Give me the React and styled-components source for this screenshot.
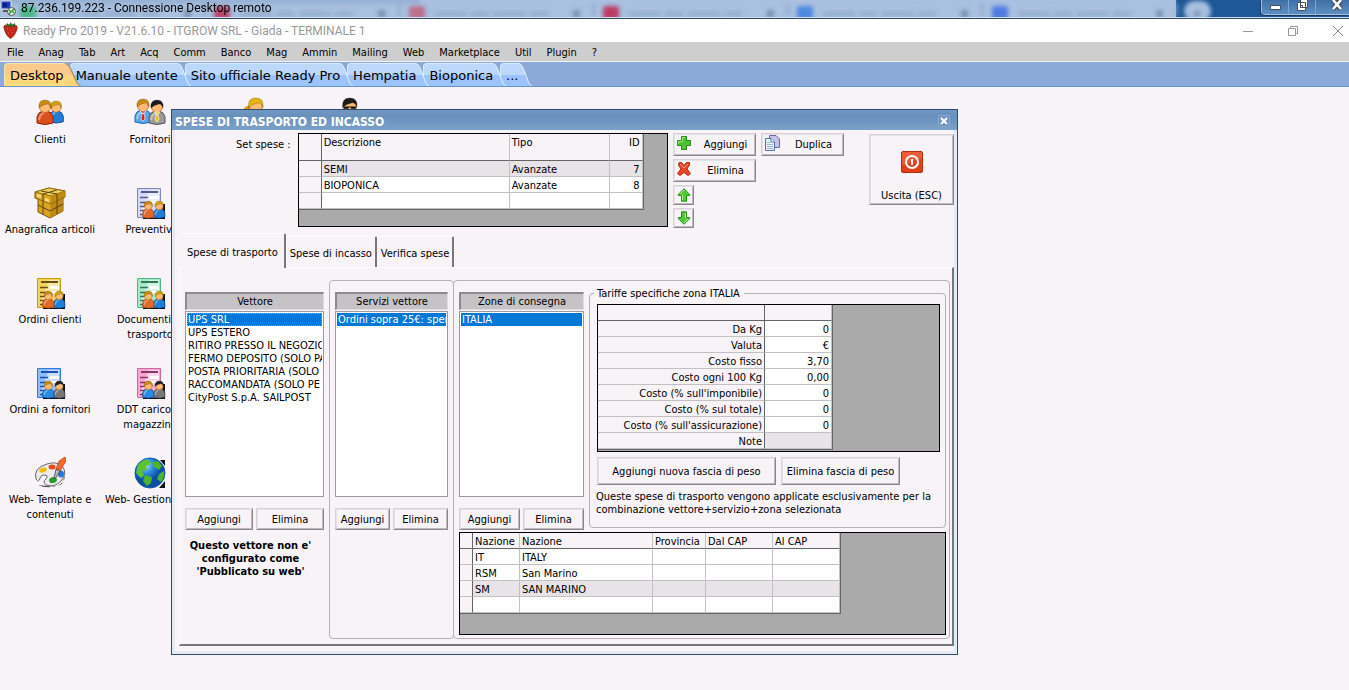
import { useState } from "react";
import styled, { createGlobalStyle, css } from "styled-components";

const GlobalStyle = createGlobalStyle`
    * {
        box-sizing: border-box;
    }
    body {
        margin: 0;
        background: #f7f3f7;
        color: #000;
        font: 11px/13px "DejaVu Sans Condensed", "Noto Sans", sans-serif;
    }
    button {
        font: inherit;
        color: inherit;
        cursor: pointer;
    }
`;

const Screen = styled.div`
    display: flex;
    flex-direction: column;
    min-height: 100vh;
    overflow: hidden;
`;

/* remote session bar */
const RemoteBar = styled.header`
    position: relative;
    display: flex;
    justify-content: space-between;
    height: 19px;
    overflow: hidden;
    background: #a9c0e0;
    border-bottom: 1px solid #33475f;
    box-shadow: inset 0 -1px 0 #cfe0f2;
`;
const Glass = styled.svg`
    position: absolute;
    top: 0;
    left: 0;
    width: 100%;
    height: 17px;
`;
const RemoteTitle = styled.div`
    position: relative;
    display: flex;
    align-items: center;
    gap: 5px;
    padding-bottom: 2px;
    font: 12px/16px Roboto, "Noto Sans", sans-serif;
`;
const RemoteControls = styled.div`
    position: relative;
    display: flex;
    height: 15px;
    border: 1px solid #9fc0e2;
    border-width: 0 0 1px 1px;
    border-radius: 0 0 0 4px;
    box-shadow: -1px 1px 0 #1b3a60;
`;
const RemoteButton = styled.button`
    display: flex;
    justify-content: center;
    width: ${(p) => (p.$wide ? 33 : 27)}px;
    padding: 0 ${(p) => (p.$wide ? 0 : 4)}px 0 ${(p) => (p.$wide ? 10 : 4)}px;
    border: 0;
    border-right: 1px solid ${(p) => (p.$wide ? "transparent" : "#7fa6cf")};
    background: linear-gradient(#3e6fa6, #5f8fc2);
`;

/* application bars */
const AppBar = styled.div`
    display: flex;
    align-items: center;
    justify-content: space-between;
    height: 23px;
    background: #fff;
    color: #999;
    font: 12px/16px Roboto, "Noto Sans", sans-serif;
`;
const AppTitle = styled.div`
    display: flex;
    align-items: center;
    gap: 5px;
    padding-left: 3px;
`;
const AppControls = styled.div`
    display: flex;
    gap: 23px;
`;
const AppButton = styled.button`
    display: flex;
    align-items: center;
    justify-content: center;
    width: 22px;
    height: 20px;
    padding: 0;
    border: 0;
    background: none;
`;
const MenuBar = styled.nav`
    display: flex;
    gap: 15px;
    height: 20px;
    padding: 4px 7px 0;
    background: #cecece;
    border-bottom: 1px solid #f4f4f4;
`;
const MenuItem = styled.button`
    height: 13px;
    padding: 0;
    border: 0;
    background: none;
`;
const TabBar = styled.nav`
    display: flex;
    align-items: flex-end;
    height: 25px;
    padding-left: 4px;
    background: #8baad7;
    border-bottom: 1px solid #6593cf;
`;
const AppTab = styled.button`
    position: relative;
    z-index: ${(p) => p.$level};
    display: flex;
    height: 23px;
    margin: 0 ${(p) => (p.$active ? -11 : -6)}px 0 0;
    padding: 0;
    border: 0;
    background: none;
    font: 13px/23px "DejaVu Sans", sans-serif;
`;
const AppTabText = styled.span`
    position: relative;
    z-index: 1;
    height: 23px;
    padding-left: 5px;
    border: solid #dcebfb;
    border-width: 1px 0 0 1px;
    border-radius: 4px 0 0 0;
    background: linear-gradient(#bcd8fb 50%, #9cc4fb 50%);
    white-space: nowrap;
    ${(p) => p.$active && css`
        padding-right: 1px;
        border-color: #fbe0b4;
        background: linear-gradient(#fac98c 50%, #ffd27a 50%, #ffdc7c);
    `}
`;
const AppTabCap = styled.svg`
    width: 13px;
    height: 23px;
    flex: none;
    ${(p) => p.$active && css`width: 16px;`}
`;

/* desktop */
const DesktopArea = styled.main`
    position: relative;
    flex: 1;
    padding-top: 10px;
`;
const IconGrid = styled.div`
    display: grid;
    grid-template-columns: repeat(4, 100px);
    grid-auto-rows: 90px;
`;
const Shortcut = styled.button`
    display: flex;
    flex-direction: column;
    align-items: center;
    gap: 3px;
    padding: 0 2px;
    border: 0;
    background: none;
    line-height: 15px;
    text-align: center;
`;

/* dialog */
const Dialog = styled.section`
    position: absolute;
    top: 22px;
    left: 171px;
    width: 787px;
    padding-bottom: 8px;
    border: 1px solid #2f4b6b;
    background: #f7f3f7;
    box-shadow: inset 3px 0 0 #e6eaf1, inset -3px -3px 0 #e6eaf1;
`;
const DialogTitle = styled.div`
    display: flex;
    align-items: center;
    justify-content: space-between;
    height: 20px;
    padding: 4px 7px 0 3px;
    background: linear-gradient(#6f97c0, #6990bd 30%, #7ba1c8);
    color: #fff;
    font: bold 12px/16px "DejaVu Sans Condensed", sans-serif;
`;
const CloseButton = styled.button`
    display: flex;
    align-items: center;
    justify-content: center;
    width: 12px;
    height: 12px;
    margin-bottom: 2px;
    padding: 0;
    border: 1px solid #88a9cd;
    background: #6d95c0;
`;
const TopRow = styled.div`
    display: flex;
    align-items: flex-start;
    padding: 3px 3px 5px 64px;
`;
const SetLabel = styled.label`
    flex: 1;
    padding: 5px 7px 0 0;
    white-space: nowrap;
`;
const Toolbar = styled.div`
    display: grid;
    grid-template-columns: 83px 83px;
    gap: 3px 5px;
    margin: 0 25px 0 5px;
    justify-items: start;
`;
const Button = styled.button`
    display: flex;
    align-items: center;
    justify-content: center;
    flex: ${(p) => p.$grow || "none"};
    height: 22px;
    padding: 0;
    border: 1px solid;
    border-color: #d6d3d6 #8b888b #8b888b #d6d3d6;
    background: #f7f3f7;
    box-shadow: inset 1px 1px 0 #e6e2e6, inset -1px -1px 0 #bdbabd;
    white-space: nowrap;
`;
const ToolButton = styled(Button)`
    justify-content: flex-start;
    width: 83px;
    height: 23px;
    padding-left: 2px;
    grid-column: ${(p) => p.$col};

    svg {
        align-self: flex-start;
        flex: none;
        margin-top: 1px;
    }
    span {
        flex: 1;
        padding-left: 4px;
        text-align: center;
    }
`;
const ArrowButton = styled(Button)`
    width: 21px;
    height: 20px;
    grid-column: 1;
`;
const ExitButton = styled(Button)`
    flex-direction: column;
    justify-content: flex-end;
    gap: 16px;
    width: 85px;
    height: 71px;
    padding-bottom: 2px;
    margin-top: 1px;
`;
const RateButton = styled(Button)`
    width: ${(p) => p.$width}px;
    height: 28px;
    margin-top: 5px;
`;

const GridBox = styled.div`
    width: ${(p) => p.$width || "auto"};
    padding-bottom: ${(p) => p.$space}px;
    border: 1px solid #000;
    background: #abaaab;
`;
const Table = styled.table`
    width: ${(p) => p.$width}px;
    table-layout: fixed;
    border-spacing: 0;
    border: solid #666;
    border-width: 0 1px 1px 0;
`;
const Cell = styled.td`
    height: 16px;
    padding: 1px 2px 0 2px;
    border: solid #c3c0c3;
    border-width: 0 1px 1px 0;
    background: ${(p) => (p.$shaded ? "#e7e3e7" : "#fff")};
    line-height: 13px;
    text-align: ${(p) => (p.$right ? "right" : "left")};
    white-space: nowrap;
    overflow: hidden;
`;
const HeadCell = styled(Cell).attrs({ as: "th" })`
    height: ${(p) => (p.$tall ? 27 : 16)}px;
    padding-top: ${(p) => (p.$tall ? 2 : 1)}px;
    background: #f7f3f7;
    border-bottom-color: #666;
    font-weight: normal;
    vertical-align: ${(p) => (p.$tall ? "top" : "middle")};
`;
const RowHead = styled(Cell).attrs({ as: "th" })`
    background: #f7f3f7;
    border-right-color: #666;
    border-bottom-color: ${(p) => (p.$head ? "#666" : "#c3c0c3")};
    font-weight: normal;
`;

const PageTabs = styled.div`
    display: flex;
    align-items: flex-end;
    height: 34px;
    padding-left: 8px;
`;
const PageTab = styled.button`
    position: relative;
    height: ${(p) => (p.$active ? 35 : 31)}px;
    margin-bottom: ${(p) => (p.$active ? -1 : 0)}px;
    padding: 2px ${(p) => (p.$active ? 6 : 3)}px 0 ${(p) => (p.$active ? 7 : 4)}px;
    border: solid;
    border-width: 1px 2px 0 0;
    border-color: #fff #777 #fff #fff;
    border-radius: 2px 2px 0 0;
    background: #f7f3f7;
    white-space: nowrap;
`;
const Page = styled.div`
    display: flex;
    margin: 0 3px 0 7px;
    padding: 12px 2px 5px 5px;
    border: solid;
    border-width: 1px 2px 2px 1px;
    border-color: #fff #777 #777 #fff;
`;
const Column = styled.div`
    display: flex;
    flex-direction: column;
    width: ${(p) => p.$width}px;
    flex: none;
    padding-top: ${(p) => (p.$plain ? 12 : 0)}px;
`;
const Group = styled.div`
    display: flex;
    flex-direction: column;
    flex: ${(p) => (p.$grow ? 1 : "none")};
    margin-left: ${(p) => (p.$grow ? -1 : 5)}px;
    padding: 11px 5px 3px;
    padding-right: ${(p) => (p.$grow ? 3 : 5)}px;
    border: 1px solid #b5b2b5;
    border-radius: 4px;
`;
const GroupTop = styled.div`
    display: flex;
    gap: 5px;
    padding-bottom: 2px;
`;
const ColumnHead = styled.div`
    height: 18px;
    border: 1px solid;
    border-width: 2px 1px 1px 2px;
    border-color: #8c8a8c #dedbde #dedbde #8c8a8c;
    background: #c6c3c6;
    line-height: 15px;
    text-align: center;
`;
const ListBox = styled.ul`
    height: 186px;
    margin: 1px 0 11px;
    padding: 1px;
    border: 1px solid #9c9a9c;
    background: #fff;
    list-style: none;
    overflow: hidden;
`;
const ListItem = styled.li`
    height: 13px;
    padding-left: 1px;
    line-height: 13px;
    white-space: nowrap;
    overflow: hidden;
    cursor: default;
    ${(p) => p.$selected && css`
        background: #0078d7;
        color: #fff;
    `}
    ${(p) => p.$focused && css`
        outline: 1px dotted #ff8728;
        outline-offset: -1px;
    `}
`;
const ButtonRow = styled.div`
    display: flex;
    gap: ${(p) => p.$gap || 3}px;
`;
const Warning = styled.p`
    margin: 9px 0 0;
    padding-right: 8px;
    font-weight: bold;
    text-align: center;
`;
const Tariffs = styled.fieldset`
    flex: 1;
    min-width: 0;
    margin: -5px 0 2px;
    padding: 4px 5px 8px 7px;
    border: 1px solid #b5b2b5;
    border-radius: 4px;

    legend {
        margin-left: -3px;
        padding: 0 4px 0 3px;
    }
`;
const Note = styled.p`
    margin: 5px 0 0 -1px;
`;

/* icons */
const Person = ({ x = 0, y = 0, hair = "#c98a16", shirt = "#d9501e", edge = "#8c2408", s = 1, tie, glasses }) => (
    <g transform={`translate(${x} ${y}) scale(${s})`}>
        <path d="M1 23 V17 Q2 12 7 11 H11 Q16 12 17 17 V23 Q9 26 1 23Z" fill={shirt} stroke={edge} />
        <path d="M3 20 Q4 14 8 13" fill="none" stroke="#fff" strokeOpacity=".4" strokeWidth="2" />
        <circle cx="9" cy="7" r="5.5" fill="#fdbb74" stroke="#b5651a" strokeWidth=".7" />
        <path d="M3 8 Q2 0 9 0 Q16 0 15 8 Q14 4 11 4 Q6 5 3 8Z" fill={hair} stroke="#0004" strokeWidth=".7" />
        {glasses && <path d="M4 7 H14 V9 H10 V8 H8 V9 H4Z" fill="#111" />}
        {tie && <path d="M6 12 L9 15 L12 12Z M8 14 H10 L11 20 L9 22 L7 20Z" fill={tie} stroke="#fff" strokeWidth=".6" />}
    </g>
);

const Icon = ({ children, size = 32 }) => (
    <svg width={size} height={size} viewBox="0 0 32 32" aria-hidden="true">{children}</svg>
);

const DocIcon = ({ paper, line, edge, supplier }) => (
    <Icon>
        <path d="M12 21 V17 H31 V32 H9 V29Z" fill="#111" />
        <path d="M3.5 1.5 H26.5 V30.5 H3.5Z" fill={paper} stroke={edge} />
        <path d="M6 27 L15 3 H25 V14Z" fill="#fff" opacity=".5" />
        <path d="M7 5 H24" stroke={line} strokeWidth="2" />
        <path d="M6 10.5 H14 M6 15.5 H12 M6 19.5 H12 M6 23.5 H10 M6 27.5 H9" stroke={line} strokeWidth="1.4" />
        <path d="M16 9 H25 V12 H16Z M14 14 H25 V16 H14Z" fill="#fff" />
        <Person x={19} y={14} s={0.7} hair={supplier ? "#222" : "#d0a012"} shirt={supplier ? "#777" : "#1f7fd8"} edge={supplier ? "#444" : "#0b4796"} />
        <Person x={8} y={14} s={0.7} shirt={supplier ? "#2a8be0" : "#e06a2c"} edge={supplier ? "#0b4796" : "#a33d10"} />
    </Icon>
);

const BoxIcon = () => (
    <Icon>
        <path d="M1 5 L15 1 L31 4 V10 L29 11 V24 L16 31 L4 25 V12 L1 11Z" fill="#d9a520" stroke="#7a5606" />
        <path d="M1 5 L15 1 L31 4 L17 9Z" fill="#f2d060" stroke="#94700e" />
        <path d="M17 9 L31 4 V10 L29 11 V24 L16 31Z" fill="#c08a12" />
        <path d="M1 11 L17 17 L31 10" fill="none" stroke="#94700e" />
        <path d="M4 18 L16 24 L29 17 M7 4 L23 7 V27 M23 3 L9 7 V28" fill="none" stroke="#5c4512" />
        <path d="M3 7 L7 8 V11 L3 10Z M11 11 L15 12 V15 L11 14Z" fill="#f5dc80" />
    </Icon>
);

const PaletteIcon = () => (
    <Icon>
        <path d="M4 28 Q16 33 28 27 L31 18 Q31 27 20 30Z" fill="#333" />
        <path d="M13 7 Q22 4 28 9 Q34 16 27 24 Q20 31 12 28 Q8 25 12 22 Q15 18 10 18 Q7 18 6 21 Q5 26 2 22 Q-1 11 13 7Z" fill="#ececec" stroke="#666" />
        <ellipse cx="9" cy="13" rx="4" ry="2.5" fill="#f2bd18" transform="rotate(-20 9 13)" />
        <ellipse cx="18" cy="10" rx="3.5" ry="2.5" fill="#e5481d" />
        <ellipse cx="27" cy="17" rx="3" ry="3.5" fill="#2479df" />
        <ellipse cx="19" cy="23" rx="4" ry="3" fill="#259c2e" transform="rotate(-20 19 23)" />
        <path d="M31 0 L32 4 L26 14 L22 12 L25 4Z" fill="#f16a2a" stroke="#b93c10" strokeWidth=".7" />
        <path d="M22 12 L26 14 L21 22 L20 21Z" fill="#bbb" stroke="#333" strokeWidth=".7" />
    </Icon>
);

const GlobeIcon = () => (
    <Icon>
        <defs>
            <radialGradient id="sea" cx="35%" cy="25%">
                <stop offset="0" stopColor="#b5e2fb" />
                <stop offset=".5" stopColor="#2d8fe0" />
                <stop offset="1" stopColor="#0b4fa5" />
            </radialGradient>
        </defs>
        <path d="M26 3 H31 V9Z M25 31 H31 V24Z" fill="#111" />
        <circle cx="16" cy="16" r="15" fill="url(#sea)" stroke="#0c58a8" />
        <path d="M4 8 Q9 2 14 3 L17 7 L12 9 L13 13 L8 14 L10 18 L7 21 L2 16Z" fill="#5cc22e" />
        <path d="M18 5 L24 4 L28 9 L25 13 L20 10Z M11 18 L18 20 L17 26 L13 29 L9 24Z M25 17 L30 14 Q31 21 27 25 L23 22Z" fill="#4db329" />
    </Icon>
);

const Strawberry = () => (
    <svg width="15" height="17" viewBox="0 0 15 17" aria-hidden="true">
        <path d="M1 6 Q0 3 4 3 H11 Q15 3 14 7 Q12 14 7.5 16.5 Q3 14 1 6Z" fill="#c3261b" stroke="#7d120c" strokeWidth=".7" />
        <path d="M4 7 h1 M7 8 h1 M10 7 h1 M5 11 h1 M9 11 h1" stroke="#e0705a" />
        <path d="M3 4 L4 1 L6 3 L8 0 L9 3 L12 1 L12 4 L9 5 L7 4 L5 5Z" fill="#2f6a25" />
    </svg>
);

const RemoteIcon = () => (
    <svg width="16" height="16" viewBox="0 0 16 16" aria-hidden="true">
        <path d="M1 1 H11 V9 H1Z" fill="#1c3fb5" stroke="#dfe6f2" />
        <path d="M3 3 H7 V7 H3Z" fill="#0a1f80" />
        <path d="M3 11 H8" stroke="#555" strokeWidth="2" />
        <circle cx="11.5" cy="11.5" r="4" fill="#e8eee4" stroke="#555" />
        <path d="M9 10 L11 12 L9 14 M14 9 L12 11 L14 13" fill="none" stroke="#1f9a2a" strokeWidth="1.3" />
    </svg>
);

const PlusIcon = () => (
    <svg width="16" height="16" viewBox="0 0 16 16" aria-hidden="true">
        <path d="M5.5 1.5 H10.5 V5.5 H14.5 V10.5 H10.5 V14.5 H5.5 V10.5 H1.5 V5.5 H5.5Z" fill="#4cc42f" stroke="#2b8a1c" strokeLinejoin="round" />
        <path d="M6.5 6.5 V2.5 H9 M2.5 9 V6.5 H6" fill="none" stroke="#a8eb8c" />
    </svg>
);
const CrossIcon = () => (
    <svg width="16" height="16" viewBox="0 0 16 16" aria-hidden="true">
        <path d="M3 1.5 H5.5 L8 4.5 L10.5 1.5 H13.5 V4 L11 8 L14.5 12.5 L12 14.5 L8 11.5 L4 14.5 L1.5 12.5 L5 8 L2.5 4Z" fill="#e8452a" stroke="#b02912" strokeLinejoin="round" />
        <path d="M4 3 L8 7 L12 3" fill="none" stroke="#f99a80" />
    </svg>
);
const CopyIcon = () => (
    <svg width="16" height="16" viewBox="0 0 16 16" aria-hidden="true">
        <path d="M5.5 .5 H12 L15.5 4 V12.5 H5.5Z" fill="#c9c2e8" stroke="#6e62a8" />
        <path d="M1.5 3.5 H7 L10.5 7 V15.5 H1.5Z" fill="#e8f0fb" stroke="#4f74b2" />
        <path d="M3 7.5 H6 M3 9.5 H9 M3 11.5 H9 M3 13.5 H9" stroke="#9db8dd" />
        <path d="M7 3.5 V7 H10.5" fill="#fff" stroke="#4f74b2" />
    </svg>
);
const ArrowIcon = ({ down }) => (
    <svg width="14" height="14" viewBox="0 0 14 14" aria-hidden="true">
        <g transform={down ? "rotate(180 7 7)" : undefined}>
            <path d="M7 .8 L12.8 6.5 V7.5 H9.5 V13.2 H4.5 V7.5 H1.2 V6.5Z" fill="#4ecb34" stroke="#278d1b" strokeLinejoin="round" />
            <path d="M3 6 L7 2 M5.5 7 V12" stroke="#b4f09c" />
        </g>
    </svg>
);
const PowerIcon = () => (
    <svg width="22" height="22" viewBox="0 0 22 22" aria-hidden="true">
        <rect x=".5" y=".5" width="21" height="21" rx="1.5" fill="#e2401c" stroke="#b52c10" />
        <path d="M1 1 H21 V7 L1 14Z" fill="#f2704a" opacity=".6" />
        <circle cx="11" cy="11" r="6" fill="none" stroke="#fff" strokeWidth="2" />
        <path d="M11 8 V14" stroke="#fff" strokeWidth="2" />
    </svg>
);

/* faded browser tabs seen through the glass bar */
const ghosts = [
    [20, "#3fb57b"],
    [214, "#b8335c"],
    [409, "#c0607c"],
    [603, "#bf2450"],
    [797, "#3f7ee0"],
    [992, "#3f6fe0"],
];

const GlassTabs = () => (
    <Glass aria-hidden="true">
        <defs>
            <filter id="soft" x="-20%" y="-50%" width="140%" height="200%">
                <feGaussianBlur stdDeviation="2" />
            </filter>
            <linearGradient id="deep" x1="0" x2="1">
                <stop offset="0" stopColor="#1d5797" />
                <stop offset="1" stopColor="#2a68a8" />
            </linearGradient>
        </defs>
        <rect x="1176" width="100%" height="18" fill="url(#deep)" />
        <g filter="url(#soft)">
            <rect x="-10" y="-4" width="430" height="8" fill="#8fabd0" opacity=".7" />
            <rect x="1150" y="-4" width="24" height="26" fill="#a9c0e0" />
            <rect x="1184" y="1" width="27" height="20" rx="10" fill="#a9c0e0" />
            <path d="M1193 14 H1202 M1197 10 V18" stroke="#65809f" strokeWidth="2" />
            {ghosts.map(([x, color]) => (
                <g key={x}>
                    <rect x={x} y="6" width="16" height="14" rx="3" fill={color} opacity=".85" />
                    <path d={`M${x + 26} 14 H${x + 140}`} stroke="#7c93b4" strokeWidth="5" strokeDasharray="32 4 18 5" opacity=".4" />
                    <rect x={x + 164} y="10" width="7" height="8" fill="#6f86a8" opacity=".8" />
                    <rect x={x + 184} y="4" width="2" height="12" fill="#8ba4c8" />
                </g>
            ))}
        </g>
    </Glass>
);

const menus = ["File", "Anag", "Tab", "Art", "Acq", "Comm", "Banco", "Mag", "Ammin", "Mailing", "Web", "Marketplace", "Util", "Plugin", "?"];
const appTabs = ["Desktop", "Manuale utente", "Sito ufficiale Ready Pro", "Hempatia", "Bioponica", "..."];

const shortcuts = [
    {
        label: "Clienti",
        icon: <Icon><Person x={14} y={4} s={0.9} hair="#d0a012" shirt="#1f7fd8" edge="#0b4796" /><Person x={2} y={3} /></Icon>,
    },
    {
        label: "Fornitori",
        icon: <Icon><Person x={0} y={2} shirt="#58a8ea" edge="#2568b5" tie="#d8231c" /><Person x={14} y={3} hair="#1c1c1c" shirt="#9a9a9a" edge="#555" tie="#e5c51d" /></Icon>,
    },
    { label: "", icon: <Icon><path d="M9 12 L13 9 H17 V14 H9Z" fill="#d99a12" /><Person x={11} y={1} s={1.2} hair="#e8b50e" shirt="#e08a1e" edge="#8c2408" /></Icon> },
    { label: "", icon: <Icon><Person x={5} y={1} s={1.2} hair="#1c1c1c" shirt="#555" edge="#333" glasses /></Icon> },
    { label: "Anagrafica articoli", icon: <BoxIcon /> },
    { label: "Preventivi", icon: <DocIcon paper="#d5d8f5" line="#55598c" edge="#8084c0" /> },
    null,
    null,
    { label: "Ordini clienti", icon: <DocIcon paper="#f5d35c" line="#6a5210" edge="#c79a12" /> },
    { label: "Documenti di trasporto", icon: <DocIcon paper="#a8eac8" line="#2f7a58" edge="#4fb588" /> },
    null,
    null,
    { label: "Ordini a fornitori", icon: <DocIcon paper="#8fbcfa" line="#1a4fb8" edge="#2f77ea" supplier /> },
    { label: "DDT carico di magazzino", icon: <DocIcon paper="#f2a8d0" line="#8a3768" edge="#d0679f" supplier /> },
    null,
    null,
    { label: "Web- Template e contenuti", icon: <PaletteIcon /> },
    { label: "Web-\u00a0Gestione\u00a0siti", icon: <GlobeIcon /> },
];

const carriers = [
    "UPS SRL",
    "UPS ESTERO",
    "RITIRO PRESSO IL NEGOZIO",
    "FERMO DEPOSITO (SOLO PA",
    "POSTA PRIORITARIA (SOLO",
    "RACCOMANDATA (SOLO PE",
    "CityPost S.p.A. SAILPOST",
];

const rates = [
    ["Da Kg", "0"],
    ["Valuta", "€"],
    ["Costo fisso", "3,70"],
    ["Costo ogni 100 Kg", "0,00"],
    ["Costo (% sull'imponibile)", "0"],
    ["Costo (% sul totale)", "0"],
    ["Costo (% sull'assicurazione)", "0"],
    ["Note", ""],
];

const zones = [
    ["IT", "ITALY"],
    ["RSM", "San Marino"],
    ["SM", "SAN MARINO"],
    ["", ""],
];

const pages = ["Spese di trasporto", "Spese di incasso", "Verifica spese"];

const List = ({ title, items, focused }) => {
    const [selected, setSelected] = useState(0);
    return (
        <>
            <ColumnHead>{title}</ColumnHead>
            <ListBox role="listbox" aria-label={title}>
                {items.map((item, i) => (
                    <ListItem
                        key={item}
                        role="option"
                        aria-selected={i === selected}
                        $selected={i === selected}
                        $focused={focused && i === selected}
                        onClick={() => setSelected(i)}
                    >
                        {item}
                    </ListItem>
                ))}
            </ListBox>
        </>
    );
};

const AddRemove = () => (
    <ButtonRow>
        <Button $grow={1}>Aggiungi</Button>
        <Button $grow={1}>Elimina</Button>
    </ButtonRow>
);

const Cols = ({ widths }) => (
    <colgroup>
        {widths.map((w, i) => <col key={i} width={w} />)}
    </colgroup>
);

const ExpenseSets = () => (
    <GridBox $width="372px" $space={16}>
        <Table id="sets" $width={345}>
            <Cols widths={[23, 188, 100, 33]} />
            <thead>
                <tr>
                    <RowHead $head />
                    <HeadCell $tall>Descrizione</HeadCell>
                    <HeadCell $tall>Tipo</HeadCell>
                    <HeadCell $tall $right>ID</HeadCell>
                </tr>
            </thead>
            <tbody>
                {[["SEMI", "Avanzate", "7"], ["BIOPONICA", "Avanzate", "8"], ["", "", ""]].map(([name, type, id], i) => (
                    <tr key={i}>
                        <RowHead />
                        <Cell $shaded={i === 0}>{name}</Cell>
                        <Cell $shaded={i === 0}>{type}</Cell>
                        <Cell $shaded={i === 0} $right>{id}</Cell>
                    </tr>
                ))}
            </tbody>
        </Table>
    </GridBox>
);

const RateTable = () => (
    <GridBox $space={1}>
        <Table $width={235}>
            <Cols widths={[167, 67]} />
            <thead>
                <tr>
                    <RowHead $head />
                    <HeadCell />
                </tr>
            </thead>
            <tbody>
                {rates.map(([name, value]) => (
                    <tr key={name}>
                        <RowHead scope="row" $right>{name}</RowHead>
                        <Cell $right $shaded={name === "Note"}>{value}</Cell>
                    </tr>
                ))}
            </tbody>
        </Table>
    </GridBox>
);

const ZoneTable = () => (
    <GridBox $space={20}>
        <Table $width={381}>
            <Cols widths={[13, 47, 133, 53, 67, 67]} />
            <thead>
                <tr>
                    <RowHead $head />
                    <HeadCell>Nazione</HeadCell>
                    <HeadCell>Nazione</HeadCell>
                    <HeadCell>Provincia</HeadCell>
                    <HeadCell>Dal CAP</HeadCell>
                    <HeadCell>Al CAP</HeadCell>
                </tr>
            </thead>
            <tbody>
                {zones.map(([code, name], i) => (
                    <tr key={i}>
                        <RowHead />
                        <Cell $shaded={i === 2}>{code}</Cell>
                        <Cell $shaded={i === 2}>{name}</Cell>
                        <Cell $shaded={i === 2} />
                        <Cell $shaded={i === 2} />
                        <Cell $shaded={i === 2} />
                    </tr>
                ))}
            </tbody>
        </Table>
    </GridBox>
);

const ExpensesDialog = () => {
    const [page, setPage] = useState(0);
    return (
        <Dialog role="dialog" aria-label="Spese di trasporto ed incasso">
            <DialogTitle>
                SPESE DI TRASPORTO ED INCASSO
                <CloseButton aria-label="Chiudi">
                    <svg width="8" height="8" viewBox="0 0 8 8"><path d="M1 1 L7 7 M7 1 L1 7" stroke="#fff" strokeWidth="2" /></svg>
                </CloseButton>
            </DialogTitle>
            <TopRow>
                <SetLabel htmlFor="sets">Set spese :</SetLabel>
                <ExpenseSets />
                <Toolbar>
                    <ToolButton $col={1}><PlusIcon /><span>Aggiungi</span></ToolButton>
                    <ToolButton $col={2}><CopyIcon /><span>Duplica</span></ToolButton>
                    <ToolButton $col={1}><CrossIcon /><span>Elimina</span></ToolButton>
                    <ArrowButton aria-label="Sposta su"><ArrowIcon /></ArrowButton>
                    <ArrowButton aria-label="Sposta giù"><ArrowIcon down /></ArrowButton>
                </Toolbar>
                <ExitButton><PowerIcon />Uscita (ESC)</ExitButton>
            </TopRow>
            <PageTabs role="tablist">
                {pages.map((name, i) => (
                    <PageTab key={name} role="tab" aria-selected={i === page} $active={i === page} onClick={() => setPage(i)}>
                        {name}
                    </PageTab>
                ))}
            </PageTabs>
            <Page role="tabpanel">
                <Column $width={139} $plain>
                    <List title="Vettore" items={carriers} focused />
                    <AddRemove />
                    <Warning>Questo vettore non e' configurato come 'Pubblicato su web'</Warning>
                </Column>
                <Group>
                    <Column $width={113}>
                        <List title="Servizi vettore" items={["Ordini sopra 25€: sper"]} />
                        <AddRemove />
                    </Column>
                </Group>
                <Group $grow>
                    <GroupTop>
                        <Column $width={125}>
                            <List title="Zone di consegna" items={["ITALIA"]} />
                            <AddRemove />
                        </Column>
                        <Tariffs>
                            <legend>Tariffe specifiche zona ITALIA</legend>
                            <RateTable />
                            <ButtonRow $gap={5}>
                                <RateButton $width={179}>Aggiungi nuova fascia di peso</RateButton>
                                <RateButton $width={119}>Elimina fascia di peso</RateButton>
                            </ButtonRow>
                            <Note>Queste spese di trasporto vengono applicate esclusivamente per la combinazione vettore+servizio+zona selezionata</Note>
                        </Tariffs>
                    </GroupTop>
                    <ZoneTable />
                </Group>
            </Page>
        </Dialog>
    );
};

const App = () => {
    const [tab, setTab] = useState(0);
    return (
        <Screen>
            <GlobalStyle />
            <RemoteBar>
                <GlassTabs />
                <RemoteTitle><RemoteIcon />87.236.199.223 - Connessione Desktop remoto</RemoteTitle>
                <RemoteControls>
                    <RemoteButton aria-label="Riduci">
                        <svg width="13" height="12"><path d="M1.5 5.5 H11.5 V9.5 H1.5Z" fill="#fff" stroke="#4a4f5a" /></svg>
                    </RemoteButton>
                    <RemoteButton aria-label="Ripristina">
                        <svg width="13" height="12"><path d="M4.5 -1 H11.5 V7.5 H4.5Z M1.5 2.5 H9.5 V10.5 H1.5Z M4.5 5.5 H6.5 V7.5 H4.5Z" fill="#fff" stroke="#4a4f5a" /></svg>
                    </RemoteButton>
                    <RemoteButton $wide aria-label="Chiudi sessione">
                        <svg width="14" height="12">
                            <path d="M3 0 L11 9 M11 0 L3 9" stroke="#4a4f5a" strokeWidth="5" />
                            <path d="M3 0 L11 9 M11 0 L3 9" stroke="#fff" strokeWidth="2.6" />
                        </svg>
                    </RemoteButton>
                </RemoteControls>
            </RemoteBar>
            <AppBar>
                <AppTitle><Strawberry />Ready Pro 2019 - V21.6.10 - ITGROW SRL - Giada - TERMINALE 1</AppTitle>
                <AppControls>
                    <AppButton aria-label="Riduci a icona"><svg width="10" height="10"><path d="M0 5.5 H10" stroke="#999" /></svg></AppButton>
                    <AppButton aria-label="Ripristina finestra"><svg width="10" height="10"><path d="M.5 2.5 H7.5 V9.5 H.5Z M2.5 2.5 V.5 H9.5 V7.5 H7.5" fill="none" stroke="#999" /></svg></AppButton>
                    <AppButton aria-label="Chiudi programma"><svg width="10" height="10"><path d="M0 0 L10 10 M10 0 L0 10" stroke="#888" /></svg></AppButton>
                </AppControls>
            </AppBar>
            <MenuBar>
                {menus.map((name) => <MenuItem key={name}>{name}</MenuItem>)}
            </MenuBar>
            <TabBar>
                {appTabs.map((name, i) => (
                    <AppTab key={name} $level={appTabs.length - i} $active={i === tab} onClick={() => setTab(i)}>
                        <AppTabText $active={i === tab}>{name}</AppTabText>
                        <AppTabCap $active={i === tab} viewBox="0 0 13 23" preserveAspectRatio="none">
                            <path d="M0 0 Q3 1 5 7 L9 18 Q10 22 13 23 H0Z" fill={i === tab ? "#fac98c" : "#bcd8fb"} />
                            <path d="M0 12 H7 L9 18 Q10 22 13 23 H0Z" fill={i === tab ? "#ffd67b" : "#9cc4fb"} />
                            <path d="M0 .5 Q3 1 5 7 L9 18 Q10 22 13 23" fill="none" stroke={i === tab ? "#a98a62" : "#e4f0fd"} />
                        </AppTabCap>
                    </AppTab>
                ))}
            </TabBar>
            <DesktopArea>
                <IconGrid>
                    {shortcuts.map((item, i) => item ? (
                        <Shortcut key={i}>{item.icon}{item.label}</Shortcut>
                    ) : <span key={i} />)}
                </IconGrid>
                <ExpensesDialog />
            </DesktopArea>
        </Screen>
    );
};

export default App;
